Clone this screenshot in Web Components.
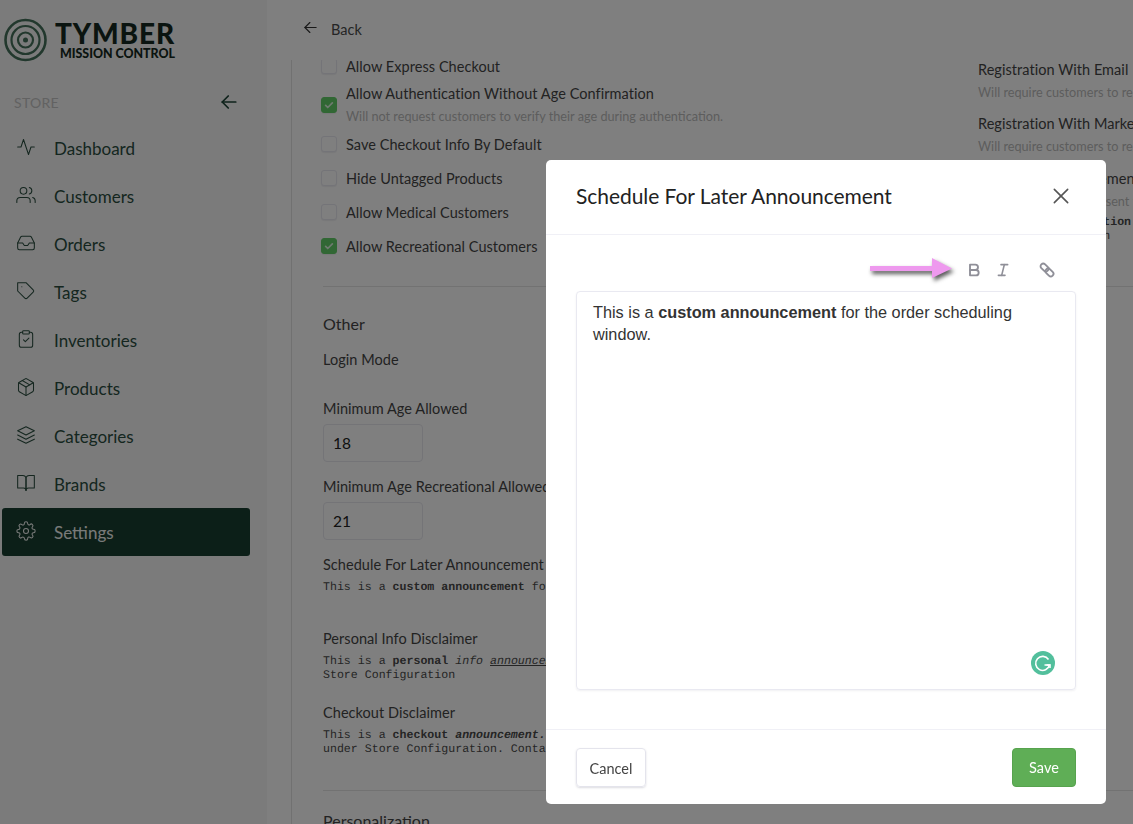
<!DOCTYPE html>
<html lang="en"><head><meta charset="utf-8"><title>Tymber Mission Control</title>
<style>
html,body{margin:0;height:824px;overflow:hidden;background:#fff}
body{font-family:Lato,"Liberation Sans",sans-serif;color:#444}
</style></head><body>
<tm-app>
  <tm-sidebar slot="side">
    <tm-nav icon="activity">Dashboard</tm-nav>
    <tm-nav icon="users">Customers</tm-nav>
    <tm-nav icon="inbox">Orders</tm-nav>
    <tm-nav icon="tag">Tags</tm-nav>
    <tm-nav icon="clipboard" size="24">Inventories</tm-nav>
    <tm-nav icon="box">Products</tm-nav>
    <tm-nav icon="layers">Categories</tm-nav>
    <tm-nav icon="book">Brands</tm-nav>
    <tm-nav icon="settings" active>Settings</tm-nav>
  </tm-sidebar>
  <tm-settings slot="main"></tm-settings>
</tm-app>
<tm-modal heading="Schedule For Later Announcement"></tm-modal>
<script>
const I={
activity:'<path d="M22 12h-4l-3 9L9 3l-3 9H2"/>',
users:'<path d="M17 21v-2a4 4 0 0 0-4-4H5a4 4 0 0 0-4 4v2"/><circle cx="9" cy="7" r="4"/><path d="M23 21v-2a4 4 0 0 0-3-3.87"/><path d="M16 3.13a4 4 0 0 1 0 7.75"/>',
inbox:'<path d="M22 12h-6l-2 3h-4l-2-3H2"/><path d="M5.45 5.11L2 12v6a2 2 0 0 0 2 2h16a2 2 0 0 0 2-2v-6l-3.45-6.89A2 2 0 0 0 16.76 4H7.24a2 2 0 0 0-1.79 1.11z"/>',
tag:'<path d="M20.59 13.41l-7.17 7.17a2 2 0 0 1-2.83 0L2 12V2h10l8.59 8.59a2 2 0 0 1 0 2.82z"/><path d="M7 7h.01"/>',
clipboard:'<path d="M16 4h1.5A2.5 2.5 0 0 1 20 6.5v13a2.5 2.5 0 0 1-2.5 2.5h-11A2.5 2.5 0 0 1 4 19.500v-13A2.500 2.500 0 0 1 6.500 4H8"/><rect x="8" y="2" width="8" height="4" rx="1"/><path d="M9 13l2.200 2.200L15.500 11"/>',
box:'<path d="M21 16V8a2 2 0 0 0-1-1.730l-7-4a2 2 0 0 0-2 0l-7 4A2 2 0 0 0 3 8v8a2 2 0 0 0 1 1.730l7 4a2 2 0 0 0 2 0l7-4A2 2 0 0 0 21 16z"/><path d="M3.270 6.960L12 12.010l8.730-5.050"/><path d="M12 22.080V12"/><path d="M7.500 4.210l9 5.190"/>',
layers:'<path d="M12 2L2 7l10 5 10-5-10-5z"/><path d="M2 12l10 5 10-5"/><path d="M2 17l10 5 10-5"/>',
book:'<path d="M2 3h6a4 4 0 0 1 4 4v14a3 3 0 0 0-3-3H2z"/><path d="M22 3h-6a4 4 0 0 0-4 4v14a3 3 0 0 1 3-3h7z"/>',
settings:'<circle cx="12" cy="12" r="3"/><path d="M19.400 15a1.650 1.650 0 0 0 .330 1.820l.060.060a2 2 0 0 1-2.830 2.830l-.060-.060a1.650 1.650 0 0 0-1.820-.330 1.650 1.650 0 0 0-1 1.510V21a2 2 0 0 1-4 0v-.090A1.650 1.650 0 0 0 9 19.400a1.650 1.650 0 0 0-1.820.330l-.060.060a2 2 0 0 1-2.830-2.830l.060-.060a1.650 1.650 0 0 0 .330-1.820 1.650 1.650 0 0 0-1.510-1H3a2 2 0 0 1 0-4h.090A1.650 1.650 0 0 0 4.600 9a1.650 1.650 0 0 0-.330-1.820l-.060-.060a2 2 0 0 1 2.830-2.830l.060.060a1.650 1.650 0 0 0 1.820.330H9a1.650 1.650 0 0 0 1-1.510V3a2 2 0 0 1 4 0v.090a1.650 1.650 0 0 0 1 1.510 1.650 1.650 0 0 0 1.820-.330l.060-.060a2 2 0 0 1 2.830 2.830l-.060.060a1.650 1.650 0 0 0-.330 1.820V9a1.650 1.650 0 0 0 1.510 1H21a2 2 0 0 1 0 4h-.090a1.650 1.650 0 0 0-1.510 1z"/>',
left:'<path d="M21 12H3"/><path d="M11 4l-8 8 8 8"/>',
x:'<path d="M4 4l16 16"/><path d="M20 4L4 20"/>',
bold:'<path d="M6 4h8a4 4 0 0 1 0 8H6z"/><path d="M6 12h9a4 4 0 0 1 0 8H6z"/>',
italic:'<path d="M19 4H9"/><path d="M15 20H5"/><path d="M14 4l-4 16"/>',
link:'<g transform="rotate(-45 12 12)"><rect x="8" y="0" width="8" height="13.500" rx="4"/><rect x="8" y="10.500" width="8" height="13.500" rx="4"/></g>'
};
const svg=(n,s,w=1.5)=>`<svg width="${s}" height="${s}" viewBox="0 0 24 24" fill="none" stroke="currentColor" stroke-width="${w}" stroke-linecap="round" stroke-linejoin="round" aria-hidden="true">${I[n]}</svg>`;
const def=(name,html)=>customElements.define(name,class extends HTMLElement{
  constructor(){super();this.attachShadow({mode:'open'}).innerHTML=typeof html==='function'?html(this):html;}
  connectedCallback(){if(typeof html==='function')this.shadowRoot.innerHTML=html(this);}
});
const FONT='font-family:Lato,"Liberation Sans",sans-serif;';

def('tm-app',`<style>
:host{display:flex;width:1133px;height:824px;overflow:hidden;${FONT}}
.s{flex:0 0 267px;background:#f6f6f6}
.m{flex:1;min-width:0;background:#fff}
</style><div class="s"><slot name="side"></slot></div><div class="m"><slot name="main"></slot></div>`);

def('tm-sidebar',`<style>
:host{display:flex;flex-direction:column}
.logo{height:80px;display:flex;align-items:center;padding-left:4px;gap:8px;box-sizing:border-box}
.word{width:120px;display:flex;flex-direction:column;align-items:flex-end;color:#142820;font-weight:900;line-height:1}
.t{font-size:28px;letter-spacing:.85px;height:26px;line-height:26px;align-self:flex-start}
.c{font-size:12.400px;letter-spacing:0;line-height:15px}
.store{height:44px;display:flex;align-items:center;justify-content:space-between;padding:0 29px 0 14px;box-sizing:border-box;font-size:14px;letter-spacing:.3px}
.store span{color:#c4c4c4}
.store i{display:flex;color:#1d4436}
nav{display:flex;flex-direction:column;padding-left:2px;width:248px}
</style>
<div class="logo">
<svg width="43" height="44" viewBox="0 0 43 44" fill="none" stroke="#44705a" aria-hidden="true"><circle cx="21.500" cy="22" r="20" stroke-width="2.600"/><circle cx="21.500" cy="22" r="14" stroke-width="2.200"/><circle cx="21.500" cy="22" r="7.500" stroke-width="2.200"/><circle cx="21.500" cy="22" r="2.500" fill="#44705a" stroke="none"/></svg>
<div class="word"><span class="t">TYMBER</span><span class="c">MISSION CONTROL</span></div></div>
<div class="store"><span>STORE</span><i>${svg('left',18,2.3)}</i></div>
<nav><slot></slot></nav>`);

def('tm-nav',h=>{const a=h.hasAttribute('active');return `<style>
:host{display:flex;align-items:center;height:48px;border-radius:3px;padding-left:14px;gap:18px;background:${a?'#193e31':'transparent'};color:${a?'#f2f5f3':'#2a4d3f'};font-size:17px}
i{display:flex;width:20px;justify-content:center;margin-bottom:2px}
span{padding-top:1px}
</style><i>${svg(h.getAttribute('icon'),+(h.getAttribute('size')||20),1.25)}</i><span><slot></slot></span>`});

def('tm-check',h=>{const c=h.hasAttribute('checked');return `<style>
:host{display:flex;align-items:center;gap:9px;color:#454545;font-size:14.500px;letter-spacing:.05px;white-space:nowrap;height:30px}
:host([tall]){height:40px}
.b{flex:none;width:16px;height:16px;box-sizing:border-box;border-radius:3px;border:1px solid ${c?'#62cf68':'#e8e8f0'};background:${c?'#62cf68':'#fff'};box-shadow:0 1px 1px rgba(60,60,90,.08);display:flex;align-items:center;justify-content:center;margin-left:-2px;color:#fff}
.l{display:flex;flex-direction:column;gap:4px;margin-top:2px}
:host([tall]) .l{margin-top:0}
.l div{line-height:18px}
small{display:block;line-height:18px;font-size:12.700px;letter-spacing:0;color:#bbb}
</style><span class="b">${c?`<svg width="10" height="10" viewBox="0 0 24 24" fill="none" stroke="currentColor" stroke-width="4" stroke-linecap="round" stroke-linejoin="round" opacity=".8"><path d="M4 13l5 5L20 7"/></svg>`:''}</span><div class="l"><div><slot></slot></div>${h.getAttribute('hint')?`<small>${h.getAttribute('hint')}</small>`:''}</div>`});

def('tm-field',h=>`<style>
:host{display:block;white-space:nowrap;color:#454545;font-size:14.500px;letter-spacing:.05px}
.l{line-height:20px}
.v{margin-top:5px;width:100px;height:38px;box-sizing:border-box;border:1px solid #e8e8ee;border-radius:4px;padding-left:9px;display:flex;align-items:center;color:#222;font-size:15.500px;letter-spacing:0;background:#fff}
</style><div class="l">${h.getAttribute('label')}</div>${h.getAttribute('value')?`<div class="v">${h.getAttribute('value')}</div>`:''}<slot></slot>`);

def('tm-mono',`<style>
:host{display:block;margin-top:6px;font:11.600px/14px "Liberation Mono",monospace;text-rendering:geometricPrecision;letter-spacing:0;color:#4a4a4a;white-space:pre}
</style><slot></slot>`);

def('tm-settings',`<style>
:host{display:flex;flex-direction:column;height:824px;overflow:hidden;white-space:nowrap}
.back{flex:0 0 60px;box-sizing:border-box;display:flex;align-items:center;gap:13px;padding:0 0 3px 36px;color:#4a4a4a;font-size:14.500px}
.back span{padding-top:2px}
.back i{display:flex;color:#333;margin-bottom:3px}
.body{flex:1;min-height:0;overflow:hidden;margin-left:24px;border-left:1px solid #e2e2e2;padding-left:31px}
.in{margin-top:-9px;width:900px}
.top{display:grid;grid-template-columns:655px 1fr;}
.col{display:flex;flex-direction:column;gap:4px}
.r{padding-top:9px;display:flex;flex-direction:column;gap:12px;font-size:14.500px;letter-spacing:.05px;color:#454545}
.r div{line-height:20px}
.r small{display:block;margin-top:2px;line-height:20px;font-size:12.700px;letter-spacing:0;color:#bbb}
hr{border:0;border-top:1px solid #e4e4e4;margin:25px 0 0}
h3{margin:25px 0 0;font-weight:400;font-size:16px;line-height:24px;color:#454545}
</style>
<div class="back"><i>${svg('left',15,1.8)}</i><span>Back</span></div>
<div class="body"><div class="in">
<div class="top">
<div class="col">
<tm-check>Allow Express Checkout</tm-check>
<tm-check tall checked hint="Will not request customers to verify their age during authentication.">Allow Authentication Without Age Confirmation</tm-check>
<tm-check>Save Checkout Info By Default</tm-check>
<tm-check>Hide Untagged Products</tm-check>
<tm-check>Allow Medical Customers</tm-check>
<tm-check checked>Allow Recreational Customers</tm-check>
</div>
<div class="r">
<div>Registration With Email<small>Will require customers to register with email</small></div>
<div>Registration With Marketing Opt-in<small>Will require customers to register with marketing</small></div>
<div style="margin-top:1px">Welcome Announcement<small>Announcement will be sent to customers</small>
<tm-mono style="margin-top:5px">This is a <b>registration</b> announcement
Store Configuration</tm-mono></div>
</div>
</div>
<hr>
<h3>Other</h3>
<tm-field style="margin-top:14px" label="Login Mode"></tm-field>
<tm-field style="margin-top:29px" label="Minimum Age Allowed" value="18"></tm-field>
<tm-field style="margin-top:15px" label="Minimum Age Recreational Allowed" value="21"></tm-field>
<tm-field style="margin-top:15px" label="Schedule For Later Announcement"><tm-mono>This is a <b>custom announcement</b> for the order scheduling window.</tm-mono></tm-field>
<tm-field style="margin-top:34px" label="Personal Info Disclaimer"><tm-mono>This is a <b>personal</b> <i>info <u>announcement</u></i> set under
Store Configuration</tm-mono></tm-field>
<tm-field style="margin-top:20px" label="Checkout Disclaimer"><tm-mono>This is a <b>checkout <i>announcement.</i></b> It is set
under Store Configuration. Contact support.</tm-mono></tm-field>
<hr style="margin-top:33px">
<h3 style="margin-top:18px">Personalization</h3>
</div></div>`);

def('tm-modal',h=>`<style>
:host{position:fixed;inset:0;background:rgba(0,0,0,.5);${FONT}}
.d{position:absolute;left:546px;top:160px;width:560px;height:644px;box-sizing:border-box;background:#fff;border-radius:5px;display:flex;flex-direction:column}
header{flex:0 0 75px;box-sizing:border-box;border-bottom:1px solid #f0f0f6;display:flex;align-items:center;justify-content:space-between;padding:0 35px 3px 30px}
h2{margin:0;font-weight:400;font-size:21px;letter-spacing:-.05px;color:#222}
header i{display:flex;color:#555}
.c{flex:1;min-height:0;padding:24px 30px 0;display:flex;flex-direction:column;box-sizing:border-box;height:494px}
.tb{height:22px;margin-bottom:10px;display:flex;align-items:center;justify-content:flex-end;color:#8f8f98;padding-right:21px}
.arrow{margin-right:14px;margin-bottom:4px;display:flex;filter:drop-shadow(2px 3px 2px rgba(0,0,0,.65))}
.tb span{display:flex}
.ed{position:relative;height:399px;box-sizing:border-box;border:1px solid #e9e9f1;border-radius:4px;padding:9px 16px;font:16.300px/22px "Liberation Sans",Arial,sans-serif;color:#333;box-shadow:0 1px 2px rgba(60,60,90,.08)}
.g{position:absolute;right:20px;bottom:14px;display:flex}
footer{flex:0 0 75px;box-sizing:border-box;border-top:1px solid #f0f0f6;display:flex;align-items:flex-start;justify-content:space-between;padding:18px 30px 0}
.btn{height:39px;box-sizing:border-box;display:flex;align-items:center;justify-content:center;border-radius:4px;font-size:14.500px}
.cancel{width:70px;border:1px solid #e4e4ec;color:#444;box-shadow:0 1px 2px rgba(60,60,90,.18);padding-top:1px}
.save{width:64px;background:#5fae56;border:1px solid #57a34e;color:#fff}
</style>
<div class="d" role="dialog">
<header><h2>${h.getAttribute('heading')||''}</h2><i>${svg('x',20,1.9)}</i></header>
<div class="c">
<div class="tb">
<span class="arrow"><svg width="82" height="20" viewBox="0 0 82 20" aria-hidden="true"><path d="M0 8h62V0l20 10.500L62 20v-7H0z" fill="#ee99ee"/></svg></span>
<span style="margin-right:13px">${svg('bold',16,2.800)}</span><span style="margin-right:28px">${svg('italic',16,2.400)}</span>
<span>${svg('link',16,2.800)}</span>
</div>
<div class="ed">This is a <b>custom announcement</b> for the order scheduling window.
<span class="g"><svg width="24" height="24" viewBox="0 0 24 24" aria-hidden="true"><circle cx="12" cy="12" r="12" fill="#52bf9c"/><path d="M17.500 8.500A7 7 0 1 0 18.500 14H13.500" fill="none" stroke="#fff" stroke-width="1.600"/><path d="M15.500 14h3.500v3" fill="none" stroke="#fff" stroke-width="1.600"/></svg></span></div>
</div>
<footer><div class="btn cancel">Cancel</div><div class="btn save">Save</div></footer>
</div>`);
</script>
</body></html>
